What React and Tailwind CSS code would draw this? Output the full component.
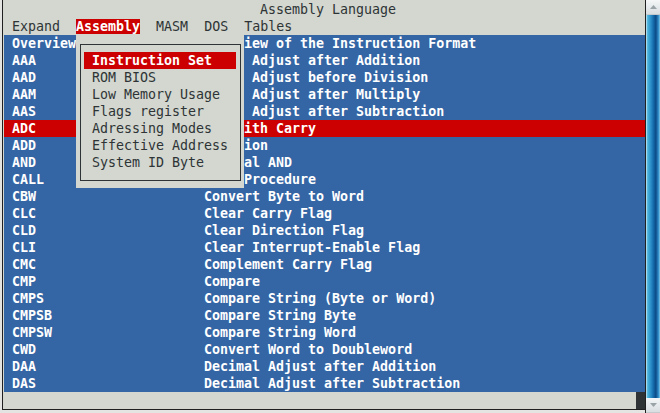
import React from 'react';

const ROWS = [
    ['Overview', 'Overview of the Instruction Format'],
    ['AAA', 'ASCII Adjust after Addition'],
    ['AAD', 'ASCII Adjust before Division'],
    ['AAM', 'ASCII Adjust after Multiply'],
    ['AAS', 'ASCII Adjust after Subtraction'],
    ['ADC', 'Add with Carry'],
    ['ADD', 'Addition'],
    ['AND', 'Logical AND'],
    ['CALL', 'Call Procedure'],
    ['CBW', 'Convert Byte to Word'],
    ['CLC', 'Clear Carry Flag'],
    ['CLD', 'Clear Direction Flag'],
    ['CLI', 'Clear Interrupt-Enable Flag'],
    ['CMC', 'Complement Carry Flag'],
    ['CMP', 'Compare'],
    ['CMPS', 'Compare String (Byte or Word)'],
    ['CMPSB', 'Compare String Byte'],
    ['CMPSW', 'Compare String Word'],
    ['CWD', 'Convert Word to Doubleword'],
    ['DAA', 'Decimal Adjust after Addition'],
    ['DAS', 'Decimal Adjust after Subtraction'],
];

const MENU = [
    'Instruction Set',
    'ROM BIOS',
    'Low Memory Usage',
    'Flags register',
    'Adressing Modes',
    'Effective Address',
    'System ID Byte',
];

const ScrollButton = ({ up }) => (
    <div className="h-[15px] shrink-0 flex items-center justify-center bg-gradient-to-b from-[#f4f6f7] to-[#d9dee1] border-b border-[#c3c9cc]">
        <svg width="7" height="4" viewBox="0 0 7 4">
            <path d={up ? 'M0 4 L3.5 0 L7 4 Z' : 'M0 0 L3.5 4 L7 0 Z'} fill="#9aa3a8" />
        </svg>
    </div>
);

const App = () => {
    return (
        <div className="w-[660px] h-[413px] bg-[#e4e4e2] flex overflow-hidden font-['DejaVu_Sans_Mono',monospace] text-[13.3px]">
            <div className="ml-[2px] w-[643px] h-[410px] border-l border-b border-[#202020] bg-[#d3d7cf] pl-[1px] pt-[1px]">
                <div className="relative">
                    {/* title */}
                    <div className="h-[17px] leading-[17px] whitespace-pre text-[#2e3436] pl-[256px]">Assembly Language</div>

                    {/* menu bar */}
                    <div className="h-[17px] leading-[17px] whitespace-pre text-[#2e3436] pl-[8px]">
                        Expand  <span className="bg-[#cc0000] text-white font-bold">Assembly</span>  MASM  DOS  Tables
                    </div>

                    {/* list */}
                    {ROWS.map(([name, desc]) => (
                        <div
                            key={name}
                            className={`flex h-[17px] leading-[17px] whitespace-pre text-white font-bold ${name === 'ADC' ? 'bg-[#cc0000]' : 'bg-[#3465a4]'}`}
                        >
                            <span className="w-[8px] shrink-0" />
                            <span className="w-[192px] shrink-0">{name}</span>
                            <span>{desc}</span>
                        </div>
                    ))}

                    {/* status line with cursor */}
                    <div className="h-[17px] flex justify-end">
                        <div className="w-[9px] h-[17px] bg-[#2e3436]" />
                    </div>

                    {/* dropdown */}
                    <div className="absolute left-[72px] top-[34px] w-[168px] h-[153px] bg-[#d3d7cf] text-[#2e3436]">
                        <div className="absolute left-[4px] top-[9px] w-[161px] h-[137px] border border-[#2e3436]" />
                        <div className="absolute left-[8px] top-[17px] w-[152px]">
                            {MENU.map((item, i) => (
                                <div
                                    key={item}
                                    className={`h-[17px] leading-[17px] whitespace-pre pl-[8px] ${i === 0 ? 'bg-[#cc0000] text-white font-bold' : ''}`}
                                >
                                    {item}
                                </div>
                            ))}
                        </div>
                    </div>
                </div>
            </div>

            {/* scrollbar */}
            <div className="w-[15px] h-[413px] border-l border-[#202020] flex flex-col">
                <ScrollButton up />
                <div className="flex-1 bg-[linear-gradient(to_right,#cfe8f2_0%,#4ab4dc_12%,#2b8ec8_35%,#1466a6_55%,#0c4b88_70%,#1e6ca8_80%,#3d9cd6_92%,#8ccaea_100%)]" />
                <ScrollButton />
            </div>
        </div>
    );
};

export default App;
